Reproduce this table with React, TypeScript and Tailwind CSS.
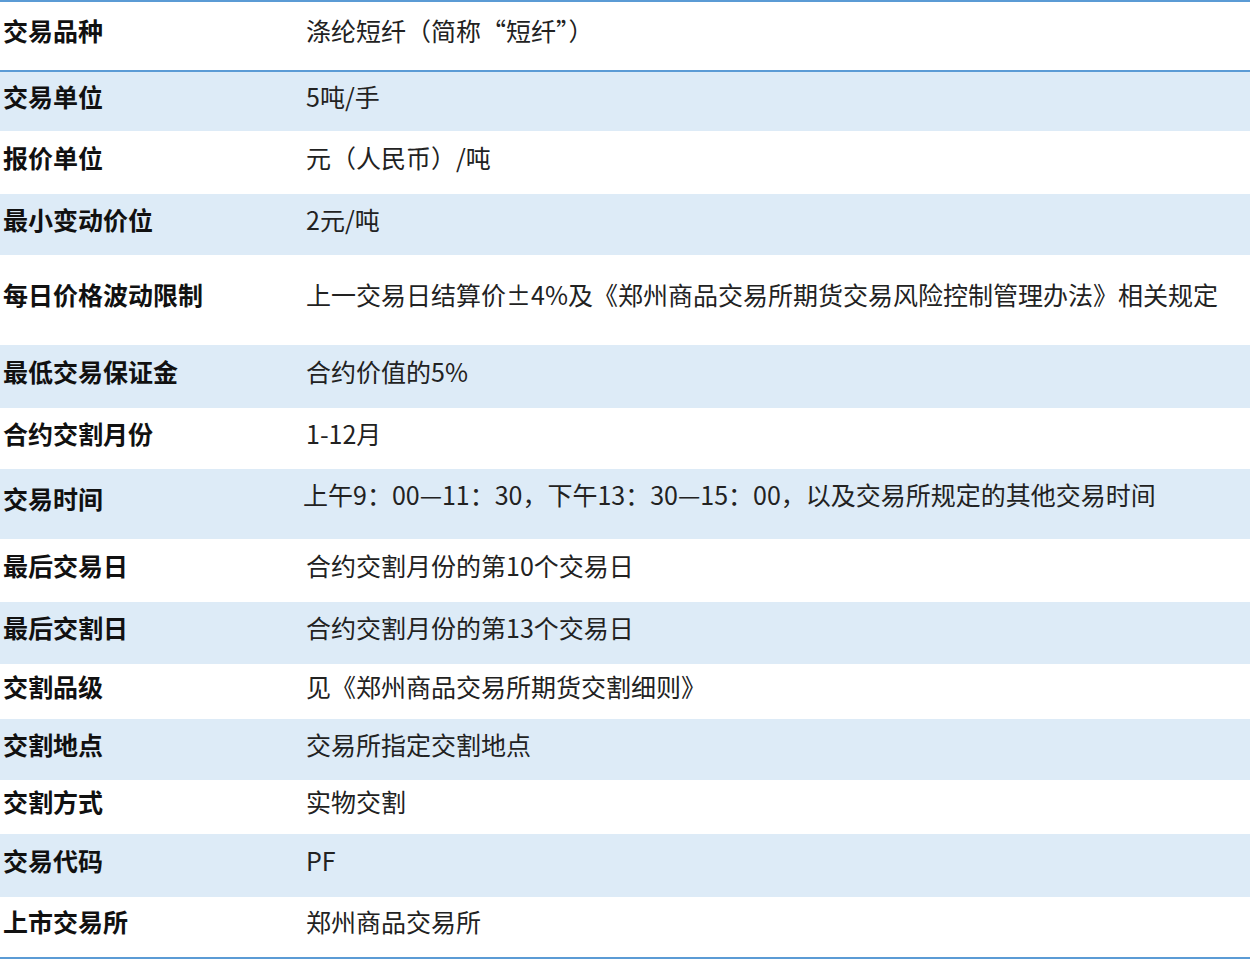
import React from "react";

type Row = { label: string; value: string; h: string; blue: boolean; shift?: boolean };

const rows: Row[] = [
  { label: "交易品种", value: "涤纶短纤（简称“短纤”）", h: "h-[70px]", blue: false },
  { label: "交易单位", value: "5吨/手", h: "h-[59px]", blue: true },
  { label: "报价单位", value: "元（人民币）/吨", h: "h-[63px]", blue: false },
  { label: "最小变动价位", value: "2元/吨", h: "h-[61px]", blue: true },
  { label: "每日价格波动限制", value: "上一交易日结算价±4%及《郑州商品交易所期货交易风险控制管理办法》相关规定", h: "h-[90px]", blue: false },
  { label: "最低交易保证金", value: "合约价值的5%", h: "h-[63px]", blue: true },
  { label: "合约交割月份", value: "1-12月", h: "h-[61px]", blue: false },
  { label: "交易时间", value: "上午9：00—11：30，下午13：30—15：00，以及交易所规定的其他交易时间", h: "h-[70px]", blue: true, shift: true },
  { label: "最后交易日", value: "合约交割月份的第10个交易日", h: "h-[63px]", blue: false },
  { label: "最后交割日", value: "合约交割月份的第13个交易日", h: "h-[62px]", blue: true },
  { label: "交割品级", value: "见《郑州商品交易所期货交割细则》", h: "h-[55px]", blue: false },
  { label: "交割地点", value: "交易所指定交割地点", h: "h-[61px]", blue: true },
  { label: "交割方式", value: "实物交割", h: "h-[54px]", blue: false },
  { label: "交易代码", value: "PF", h: "h-[63px]", blue: true },
  { label: "上市交易所", value: "郑州商品交易所", h: "h-[60px]", blue: false },
];

export default function App() {
  return (
    <div
      className="w-[1252px] h-[962px] bg-white"
      style={{ fontFamily: '"Noto Sans CJK SC", "Liberation Sans", sans-serif' }}
    >
      <div className="w-[1250px] border-t-2 border-b-2 border-[#5b9bd5]">
        {rows.map((r, i) => (
          <div
            key={i}
            className={`flex items-center ${r.h} ${r.blue ? "bg-[#ddebf7]" : "bg-white"} ${
              i === 0 ? "border-b-2 border-[#5b9bd5]" : ""
            }`}
          >
            <div className="w-[306px] shrink-0 pl-[3px] pb-[12px] text-[25px] leading-[30px] font-bold text-[#111111] whitespace-nowrap">
              {r.label}
            </div>
            <div
              className={`text-[25px] leading-[30px] text-[#222222] whitespace-nowrap ${
                r.shift ? "-ml-[3px] pb-[20px]" : "pb-[12px]"
              }`}
            >
              {r.value}
            </div>
          </div>
        ))}
      </div>
    </div>
  );
}
